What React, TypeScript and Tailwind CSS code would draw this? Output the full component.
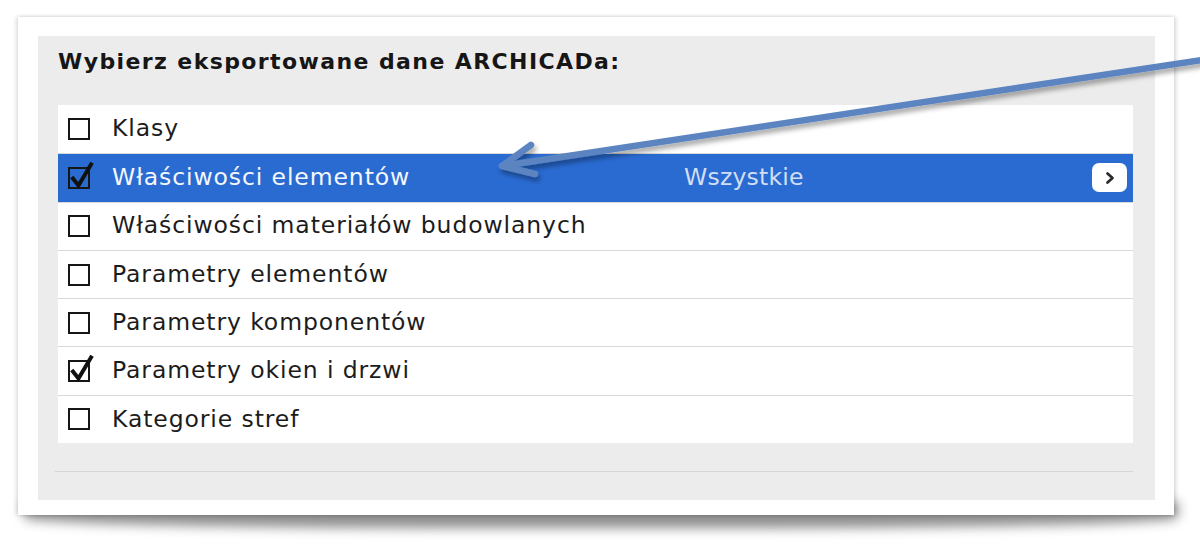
import React from 'react';

type Row = { label: string; checked: boolean; selected?: boolean; value?: string };

const rows: Row[] = [
  { label: 'Klasy', checked: false },
  { label: 'Właściwości elementów', checked: true, selected: true, value: 'Wszystkie' },
  { label: 'Właściwości materiałów budowlanych', checked: false },
  { label: 'Parametry elementów', checked: false },
  { label: 'Parametry komponentów', checked: false },
  { label: 'Parametry okien i drzwi', checked: true },
  { label: 'Kategorie stref', checked: false },
];

function Checkbox({ checked, onBlue }: { checked: boolean; onBlue?: boolean }) {
  return (
    <div className={`relative w-[22px] h-[22px] border-2 border-[#161616] shrink-0 ${onBlue ? 'bg-transparent' : 'bg-white'}`}>
      {checked && (
        <svg className="absolute left-[-1px] top-[-7px] overflow-visible" width="26" height="28" viewBox="0 0 26 28">
          <path d="M4 16.5 L9.5 23.5 L22 2.5" fill="none" stroke="#111" strokeWidth="4" strokeLinecap="square" strokeLinejoin="miter" />
        </svg>
      )}
    </div>
  );
}

// the blue callout arrow drawn over the dialog
function Arrow() {
  return (
    <svg className="absolute inset-0 pointer-events-none" width="1200" height="555" viewBox="0 0 1200 555">
      <defs>
        <filter id="sh" x="-10%" y="-50%" width="120%" height="200%">
          <feDropShadow dx="2" dy="4" stdDeviation="2.5" floodColor="#000" floodOpacity="0.35" />
        </filter>
      </defs>
      <g filter="url(#sh)" stroke="#5b84c0" strokeWidth="6.5" strokeLinecap="round" strokeLinejoin="round" fill="none">
        <path d="M1215 58 L502 166" />
        <path d="M531 145 L502 166 L535 174" />
      </g>
    </svg>
  );
}

export default function App() {
  return (
    <div className="relative w-[1200px] h-[555px] bg-white overflow-hidden" style={{ fontFamily: '"DejaVu Sans", "Liberation Sans", sans-serif' }}>
      {/* curled page shadow */}
      <div className="absolute left-[24px] right-[22px] top-[502px] h-[26px] bg-[#444] blur-[6px] rounded-b-[40%] opacity-60" />
      <div className="relative ml-[18px] mt-[17px] w-[1156px] h-[498px] bg-white shadow-[-2px_0_4px_rgba(0,0,0,0.12),2px_0_4px_rgba(0,0,0,0.15)] pt-[19px] pl-[20px]">
        <div className="w-[1117px] h-[464px] bg-[#ececec] pl-[20px] pt-[11px] flex flex-col">
          <div className="text-[22px] font-bold text-[#161616] leading-[30px] tracking-[1.4px]">
            Wybierz eksportowane dane ARCHICADa:
          </div>
          <div className="mt-[28px] w-[1075px] bg-white flex flex-col">
            {rows.map((r, i) => (
              <div
                key={r.label}
                className={`h-[48.3px] flex items-center pl-[10px] pr-[6px] text-[23.5px] leading-none tracking-[0.9px] ${i > 0 ? 'border-t border-[#d9d9d9]' : ''} ${r.selected ? 'bg-[#2a6bd2] text-[#f4f7fc]' : 'text-[#1c1c1c]'}`}
              >
                <Checkbox checked={r.checked} onBlue={r.selected} />
                <span className="ml-[22px] w-[572px] whitespace-nowrap">{r.label}</span>
                {r.value && <span className="text-[#d2def3] tracking-[0.2px]">{r.value}</span>}
                {r.selected && (
                  <div className="ml-auto w-[35px] h-[29px] bg-white rounded-[7px] flex items-center justify-center">
                    <svg width="12" height="14" viewBox="0 0 12 14">
                      <path d="M3.5 2.5 L8.5 7 L3.5 11.5" fill="none" stroke="#2a2a2a" strokeWidth="2.7" strokeLinecap="round" strokeLinejoin="round" />
                    </svg>
                  </div>
                )}
              </div>
            ))}
          </div>
          <div className="mt-[28px] ml-[-3px] w-[1078px] h-[1px] bg-[#d6d6d6]" />
        </div>
      </div>
      <Arrow />
    </div>
  );
}
